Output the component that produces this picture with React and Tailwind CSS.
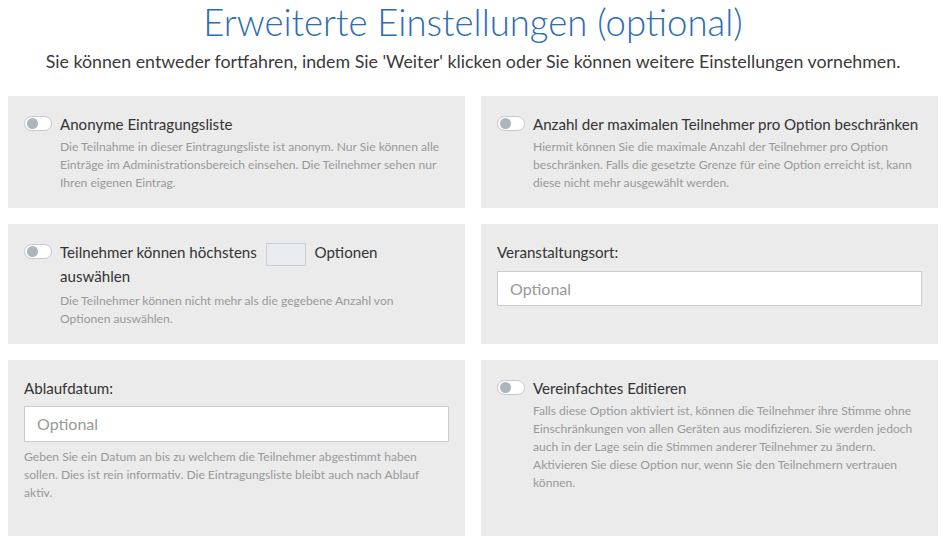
import React from "react";

function Toggle() {
  return (
    <span className="absolute left-0 top-[4px] w-[28px] h-[15px] rounded-full border border-[#c4c8cc] bg-white">
      <span className="absolute left-[1.5px] top-[1px] w-[11px] h-[11px] rounded-full bg-[#adb5bd]" />
    </span>
  );
}

function SwitchPanel({ label, desc }) {
  return (
    <div className="bg-[#ebebeb] px-4 pt-4 pb-4">
      <div className="relative pl-[36px]">
        <Toggle />
        <div className="text-[15.1px] leading-[24px] text-[#333]">{label}</div>
        <div className="mt-[2px] text-[12.1px] leading-[18px] text-[#999]">{desc}</div>
      </div>
    </div>
  );
}

export default function App() {
  return (
    <div
      className="w-[946px] h-[536px] overflow-hidden bg-white"
      style={{ fontFamily: "Lato, 'Open Sans', sans-serif" }}
    >
      <h1 className="text-center text-[36.5px] font-light leading-[44px] text-[#2e6db4]">
        Erweiterte Einstellungen (optional)
      </h1>
      <p className="mt-[5px] text-center text-[17.8px] leading-[24px] text-[#3a3a3a]">
        Sie können entweder fortfahren, indem Sie 'Weiter' klicken oder Sie können weitere Einstellungen vornehmen.
      </p>

      <div className="mt-[23px] grid grid-cols-2 gap-4 px-2">
        <SwitchPanel
          label="Anonyme Eintragungsliste"
          desc="Die Teilnahme in dieser Eintragungsliste ist anonym. Nur Sie können alle Einträge im Administrationsbereich einsehen. Die Teilnehmer sehen nur Ihren eigenen Eintrag."
        />
        <SwitchPanel
          label="Anzahl der maximalen Teilnehmer pro Option beschränken"
          desc="Hiermit können Sie die maximale Anzahl der Teilnehmer pro Option beschränken. Falls die gesetzte Grenze für eine Option erreicht ist, kann diese nicht mehr ausgewählt werden."
        />

        <div className="bg-[#ebebeb] px-4 pt-4 pb-4">
          <div className="relative pl-[36px]">
            <Toggle />
            <div className="text-[15.1px] leading-[24px] text-[#333]">
              Teilnehmer können höchstens{" "}
              <span className="inline-block align-middle -my-[3px] mx-[5px] w-[40px] h-[23px] border border-[#ccd0d5] bg-[#e9ecef]" />{" "}
              Optionen
              <br />
              auswählen
            </div>
            <div className="mt-[4px] text-[12.1px] leading-[18px] text-[#999]">
              Die Teilnehmer können nicht mehr als die gegebene Anzahl von
              <br />
              Optionen auswählen.
            </div>
          </div>
        </div>

        <div className="bg-[#ebebeb] px-4 pt-4 pb-4">
          <div className="text-[15.1px] leading-[24px] text-[#333]">Veranstaltungsort:</div>
          <div className="mt-[7px] h-[35px] border border-[#ccc] bg-white px-3 flex items-center text-[16px] text-[#999]">
            Optional
          </div>
        </div>

        <div className="bg-[#ebebeb] px-4 pt-4 pb-12">
          <div className="text-[15.1px] leading-[24px] text-[#333]">Ablaufdatum:</div>
          <div className="mt-[6px] h-[36px] border border-[#ccc] bg-white px-3 flex items-center text-[16px] text-[#999]">
            Optional
          </div>
          <div className="mt-[6px] text-[12.1px] leading-[18px] text-[#999]">
            Geben Sie ein Datum an bis zu welchem die Teilnehmer abgestimmt haben
            <br />
            sollen. Dies ist rein informativ. Die Eintragungsliste bleibt auch nach Ablauf
            <br />
            aktiv.
          </div>
        </div>

        <SwitchPanel
          label="Vereinfachtes Editieren"
          desc="Falls diese Option aktiviert ist, können die Teilnehmer ihre Stimme ohne Einschränkungen von allen Geräten aus modifizieren. Sie werden jedoch auch in der Lage sein die Stimmen anderer Teilnehmer zu ändern. Aktivieren Sie diese Option nur, wenn Sie den Teilnehmern vertrauen können."
        />
      </div>
    </div>
  );
}
